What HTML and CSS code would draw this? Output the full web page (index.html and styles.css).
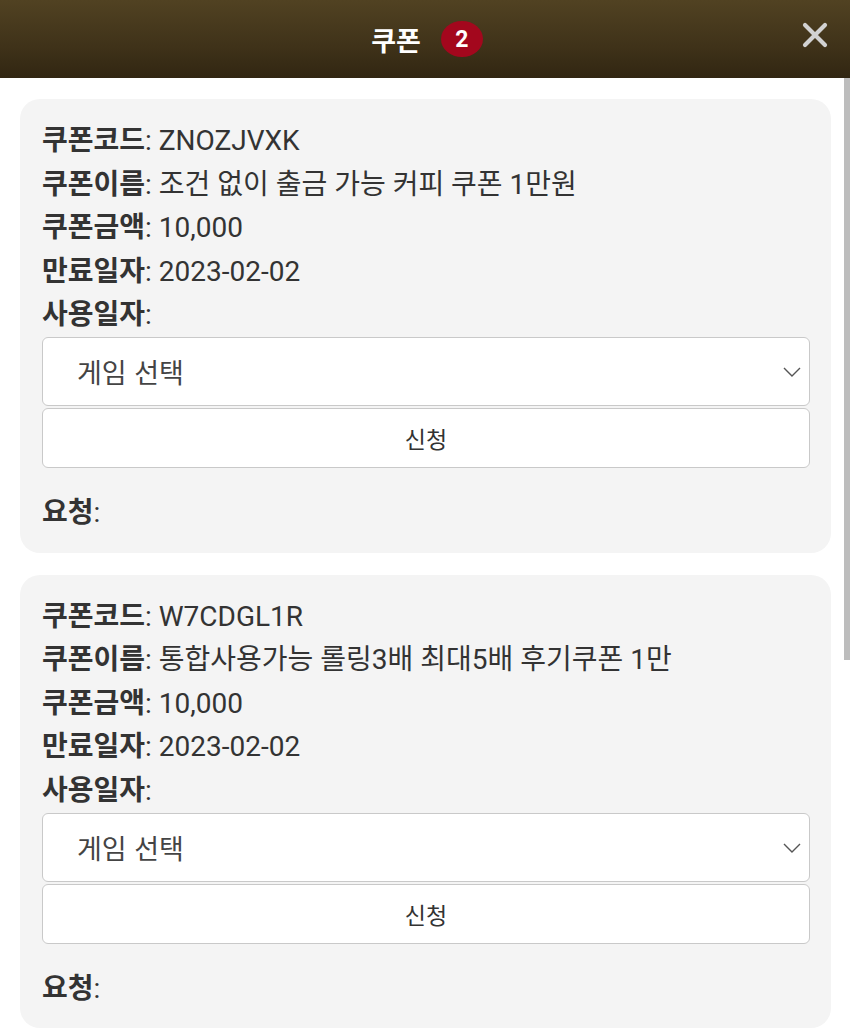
FILE: index.html
```html
<!DOCTYPE html>
<html lang="ko">
<head>
  <meta charset="UTF-8">
  <meta name="viewport" content="width=device-width, initial-scale=1.0">
  <title>쿠폰</title>
  <link rel="stylesheet" href="styles.css">
</head>
<body>
  <div class="header">
    <h1>쿠폰</h1>
    <span class="badge">2</span>
    <button class="close" aria-label="닫기">
      <svg width="26" height="26" viewBox="0 0 26 26"><path d="M3 3 L23 23 M23 3 L3 23" stroke="#d2d2d2" stroke-width="4.2" stroke-linecap="round"/></svg>
    </button>
  </div>

  <div class="list">
    <div class="card">
      <p class="row"><b>쿠폰코드</b>: ZNOZJVXK</p>
      <p class="row"><b>쿠폰이름</b>: 조건 없이 출금 가능 커피 쿠폰 1만원</p>
      <p class="row"><b>쿠폰금액</b>: 10,000</p>
      <p class="row"><b>만료일자</b>: 2023-02-02</p>
      <p class="row"><b>사용일자</b>:</p>
      <div class="select-wrap">
        <select class="game-select">
          <option>게임 선택</option>
        </select>
        <svg class="chevron" width="18" height="10" viewBox="0 0 18 10"><path d="M1 1 L9 9 L17 1" fill="none" stroke="#555" stroke-width="1.4"/></svg>
      </div>
      <button class="apply">신청</button>
      <p class="row request"><b>요청</b>:</p>
    </div>

    <div class="card">
      <p class="row"><b>쿠폰코드</b>: W7CDGL1R</p>
      <p class="row"><b>쿠폰이름</b>: 통합사용가능 롤링3배 최대5배 후기쿠폰 1만</p>
      <p class="row"><b>쿠폰금액</b>: 10,000</p>
      <p class="row"><b>만료일자</b>: 2023-02-02</p>
      <p class="row"><b>사용일자</b>:</p>
      <div class="select-wrap">
        <select class="game-select">
          <option>게임 선택</option>
        </select>
        <svg class="chevron" width="18" height="10" viewBox="0 0 18 10"><path d="M1 1 L9 9 L17 1" fill="none" stroke="#555" stroke-width="1.4"/></svg>
      </div>
      <button class="apply">신청</button>
      <p class="row request"><b>요청</b>:</p>
    </div>
  </div>

  <div class="scroll-thumb"></div>
</body>
</html>
```

FILE: styles.css
```css
body {
  margin: 0;
  width: 850px;
  background: #fff;
  font-family: 'Noto Sans CJK KR', 'Noto Sans', sans-serif;
  color: #333;
  overflow: hidden;
}
.header {
  height: 78px;
  background: linear-gradient(to bottom, #514222 0%, #3f3219 60%, #312612 100%);
  display: flex;
  align-items: center;
  justify-content: center;
  gap: 20px;
  position: relative;
  padding-left: 4px;
}
.header h1 {
  margin: 0;
  font-size: 27px;
  font-weight: 700;
  color: #fff;
  line-height: 1;
}
.badge {
  width: 42px;
  height: 36px;
  border-radius: 50%;
  background: #a3071d;
  color: #fff;
  font-family: 'Roboto', 'Liberation Sans', sans-serif;
  font-weight: 700;
  font-size: 23px;
  display: flex;
  align-items: center;
  justify-content: center;
}
.close {
  position: absolute;
  right: 22px;
  top: 22px;
  background: none;
  border: 0;
  padding: 0;
  width: 26px;
  height: 26px;
}
.list {
  padding: 21px 19px 0 20px;
  display: flex;
  flex-direction: column;
  gap: 22px;
}
.card {
  background: #f4f4f4;
  border-radius: 20px;
  padding: 20px 21px 18px 22px;
}
.row {
  margin: 0;
  font-family: 'Roboto', 'Noto Sans CJK KR', sans-serif;
  font-size: 28px;
  line-height: 43.6px;
  color: #333;
  white-space: nowrap;
}
.row b {
  font-weight: 700;
}
.select-wrap {
  position: relative;
}
.game-select {
  appearance: none;
  -webkit-appearance: none;
  width: 100%;
  height: 69px;
  background: #fff;
  border: 1px solid #c9c9c9;
  border-radius: 6px;
  padding: 0 34px;
  font-family: inherit;
  font-size: 27px;
  color: #444;
  display: block;
}
.chevron {
  position: absolute;
  right: 9px;
  top: 30px;
  pointer-events: none;
}
.apply {
  display: block;
  width: 100%;
  height: 60px;
  margin-top: 2px;
  background: #fff;
  border: 1px solid #c9c9c9;
  border-radius: 6px;
  font-family: inherit;
  font-size: 23px;
  color: #333;
}
.request {
  margin-top: 23px;
}
.scroll-thumb {
  position: absolute;
  right: 0;
  top: 78px;
  width: 6px;
  height: 582px;
  background: #bdbdbd;
}
```
